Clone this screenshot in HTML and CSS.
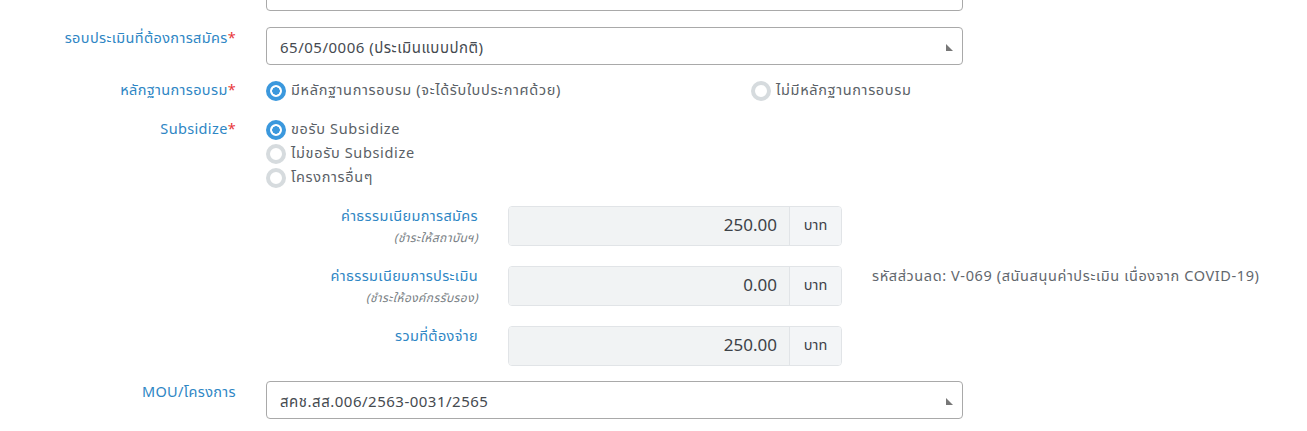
FILE: index.html
```html
<!DOCTYPE html>
<html lang="th">
<head>
<meta charset="utf-8">
<link rel="stylesheet" href="styles.css">
</head>
<body>
<form class="form">
  <div class="row row-top">
    <div class="label"></div>
    <div class="control"><div class="textbox"></div></div>
  </div>

  <div class="row row-select1">
    <div class="label">รอบประเมินที่ต้องการสมัคร<span class="req">*</span></div>
    <div class="control">
      <div class="select"><span>65/05/0006 (ประเมินแบบปกติ)</span><i class="caret"></i></div>
    </div>
  </div>

  <div class="row row-evidence">
    <div class="label lbl-radio">หลักฐานการอบรม<span class="req">*</span></div>
    <div class="control radios-inline">
      <label class="radio on"><span class="dot"></span>มีหลักฐานการอบรม (จะได้รับใบประกาศด้วย)</label>
      <label class="radio"><span class="dot"></span>ไม่มีหลักฐานการอบรม</label>
    </div>
  </div>

  <div class="row row-subsidize">
    <div class="label lbl-radio">Subsidize<span class="req">*</span></div>
    <div class="control radios-stack">
      <label class="radio on"><span class="dot"></span>ขอรับ Subsidize</label>
      <label class="radio"><span class="dot"></span>ไม่ขอรับ Subsidize</label>
      <label class="radio"><span class="dot"></span>โครงการอื่นๆ</label>
    </div>
  </div>

  <div class="fees">
    <div class="fee">
      <div class="fee-label">ค่าธรรมเนียมการสมัคร<small>(ชำระให้สถาบันฯ)</small></div>
      <div class="group"><div class="amount">250.00</div><div class="addon">บาท</div></div>
      <div class="note"></div>
    </div>
    <div class="fee">
      <div class="fee-label">ค่าธรรมเนียมการประเมิน<small>(ชำระให้องค์กรรับรอง)</small></div>
      <div class="group"><div class="amount">0.00</div><div class="addon">บาท</div></div>
      <div class="note">รหัสส่วนลด: V-069 (สนันสนุนค่าประเมิน เนื่องจาก COVID-19)</div>
    </div>
    <div class="fee">
      <div class="fee-label">รวมที่ต้องจ่าย</div>
      <div class="group"><div class="amount">250.00</div><div class="addon">บาท</div></div>
      <div class="note"></div>
    </div>
  </div>

  <div class="row row-mou">
    <div class="label">MOU/โครงการ</div>
    <div class="control">
      <div class="select"><span>สคช.สส.006/2563-0031/2565</span><i class="caret"></i></div>
    </div>
  </div>
</form>
</body>
</html>
```

FILE: styles.css
```css
html, body {
  margin: 0;
  padding: 0;
  background: #ffffff;
  overflow: hidden;
}
body {
  font-family: "Noto Sans Thai", "Noto Sans", "DejaVu Sans", sans-serif;
  color: #4a4f55;
  font-size: 14px;
}
.form {
  width: 1307px;
  margin-top: -27px;
}
.row {
  display: grid;
  grid-template-columns: 236px 697px;
  column-gap: 30px;
}
.label {
  text-align: right;
  color: #2e86c4;
  font-size: 14.5px;
  letter-spacing: 0.35px;
  line-height: 20px;
  padding-top: 2px;
}
.req { color: #e8373b; }
.textbox {
  height: 36px;
  border: 1px solid #a9a9a9;
  border-radius: 4px;
}
.select {
  height: 36px;
  border: 1px solid #a9a9a9;
  border-radius: 4px;
  display: flex;
  align-items: center;
  justify-content: space-between;
  padding: 0 9px 0 13px;
  font-size: 15px;
  letter-spacing: 0.5px;
  color: #454a50;
}
.select span { padding-top: 4px; }
.caret {
  width: 0;
  height: 0;
  border-left: 7px solid transparent;
  border-bottom: 7px solid #777777;
  transform: scaleX(-1);
  margin-top: 2px;
}
.row-select1 { margin-top: 16px; }
.row-select1 .label { padding-top: 2px; }
.row-evidence { margin-top: 14px; }
.row-subsidize { margin-top: 15px; }

.radios-inline {
  display: grid;
  grid-template-columns: 485px auto;
}
.radios-stack {
  display: flex;
  flex-direction: column;
}
.radio {
  display: flex;
  align-items: center;
  height: 24px;
  font-size: 14.5px;
  letter-spacing: 0.65px;
  color: #5a5f66;
}
.dot {
  box-sizing: border-box;
  width: 20px;
  height: 20px;
  border-radius: 50%;
  border: 4px solid #d6dbde;
  background: #ffffff;
  margin-right: 5px;
  flex: none;
}
.radio.on .dot {
  border: 4px solid #3b98dd;
  background: radial-gradient(circle, #3b98dd 0 3.5px, #ffffff 4px);
}
.lbl-radio { line-height: 24px; padding-top: 0; }

.fees {
  margin-top: 16px;
  display: flex;
  flex-direction: column;
  row-gap: 20px;
}
.fee {
  display: grid;
  grid-template-columns: 478px 334px auto;
  column-gap: 30px;
  height: 40px;
}
.fee-label {
  text-align: right;
  color: #2e86c4;
  font-size: 14.5px;
  letter-spacing: 0.35px;
  line-height: 20px;
  padding-top: 1px;
  display: flex;
  flex-direction: column;
}
.fee-label small {
  font-style: italic;
  font-size: 12px;
  letter-spacing: 0.4px;
  color: #7a7f85;
  line-height: 16px;
  margin-top: 3px;
}
.group {
  display: flex;
  height: 40px;
  box-sizing: border-box;
  border: 1px solid #e1e4e7;
  border-radius: 4px;
  overflow: hidden;
}
.amount {
  flex: 1;
  background: #f1f3f4;
  text-align: right;
  padding-right: 12px;
  font-size: 17px;
  line-height: 38px;
  color: #3d4248;
}
.addon {
  width: 51px;
  border-left: 1px solid #e1e4e7;
  background: #f3f5f7;
  text-align: center;
  font-size: 14.5px;
  line-height: 38px;
  color: #3d4248;
}
.note {
  font-size: 14.5px;
  letter-spacing: 0.6px;
  color: #62676d;
  line-height: 20px;
  padding-top: 1px;
}
.row-mou { margin-top: 15px; }
```
